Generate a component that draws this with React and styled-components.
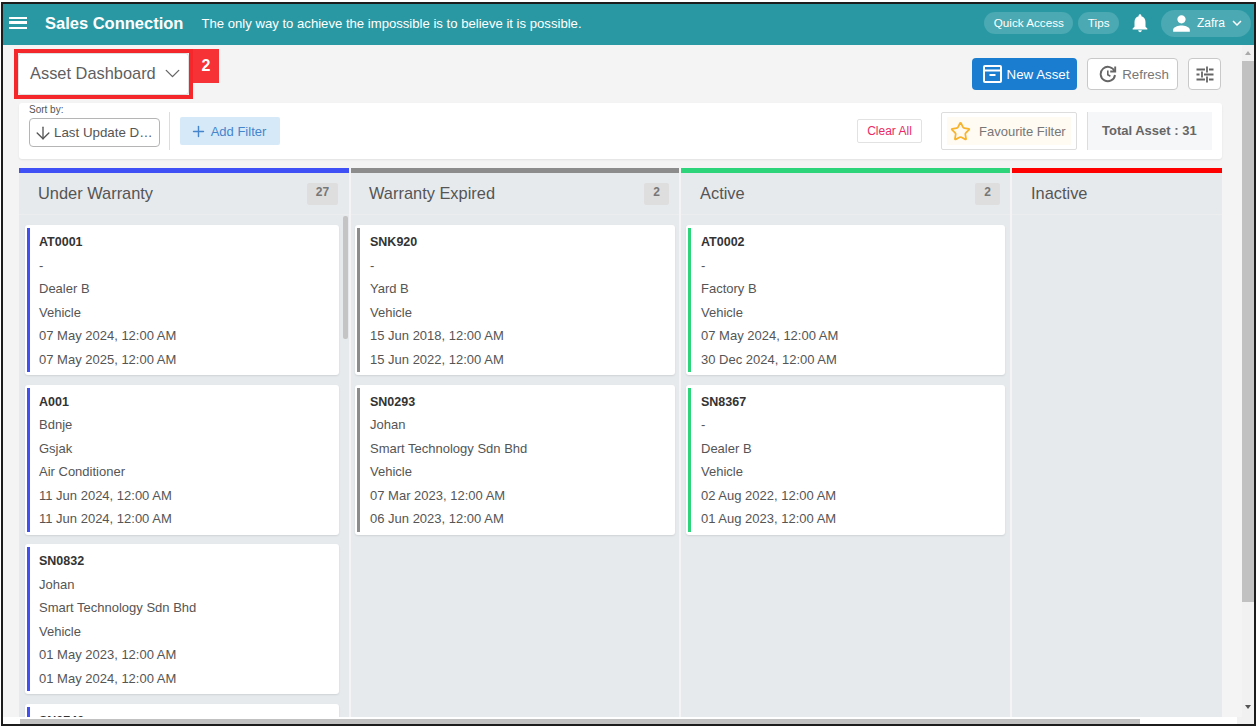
import React from "react";
import styled, { createGlobalStyle } from "styled-components";
import { ChevronDown, ArrowDown, Plus, Star } from "lucide-react";
import { MdNotifications, MdPerson, MdKeyboardArrowDown } from "react-icons/md";

const GlobalStyle = createGlobalStyle`
  html, body { margin: 0; padding: 0; background: #fff; overflow: hidden; }
  body { font-family: "Liberation Sans", Arial, sans-serif; }
  * { box-sizing: border-box; }
`;

const Frame = styled.div`
  width: 1255px;
  height: 724px;
  margin: 2px 0 0 1px;
  border: 2px solid #1c1c1c;
  display: flex;
  flex-direction: column;
  overflow: hidden;
  background: #f4f4f4;
`;

const Header = styled.header`
  height: 40.5px;
  flex: none;
  background: #2a98a3;
  color: #fff;
  display: flex;
  align-items: center;
  padding: 0 3px 0 6px;
`;

const Burger = styled.div`
  width: 18px;
  height: 12px;
  margin: -2px 18px 0 0;
  border-top: 2.5px solid #fff;
  border-bottom: 2.5px solid #fff;
  position: relative;
  &::after {
    content: "";
    position: absolute;
    left: 0;
    right: 0;
    top: 2px;
    height: 2.5px;
    background: #fff;
  }
`;

const Brand = styled.div`
  font-size: 16.5px;
  font-weight: 700;
  margin: -1px 18px 0 0;
`;

const Slogan = styled.div`
  font-size: 13.13px;
  flex: 1;
  margin-top: -2px;
`;

const Pill = styled.div`
  height: 22px;
  padding: 0 9.5px;
  border-radius: 11px;
  background: #4aa9b2;
  font-size: 11.7px;
  line-height: 21px;
  margin: -2px 5px 0 0;
`;

const BellWrap = styled.div`
  display: flex;
  margin: -2px 10px 0 5px;
`;

const UserPill = styled.div`
  width: 90px;
  height: 27px;
  border-radius: 14px;
  background: #4aa9b2;
  display: flex;
  align-items: center;
  padding-left: 8px;
  font-size: 12px;
  gap: 3px;
  margin-top: -2px;
`;

const Middle = styled.div`
  flex: 1;
  min-height: 0;
  display: flex;
`;

const Page = styled.main`
  flex: 1;
  min-width: 0;
  padding: 0 20px 0 16px;
  display: flex;
  flex-direction: column;
`;

const TitleRow = styled.div`
  height: 58.5px;
  flex: none;
  display: flex;
  align-items: flex-start;
`;

const Highlight = styled.div`
  margin: 4.5px 0 0 -5px;
  width: 179px;
  height: 50px;
  border: 4px solid #f5272b;
  padding: 1px;
`;

const ViewSelect = styled.div`
  height: 39.5px;
  background: #fff;
  border-radius: 2px;
  box-shadow: 0 0 2px rgba(0, 0, 0, 0.3);
  display: flex;
  align-items: center;
  justify-content: space-between;
  padding: 0 3px 1px 11px;
  font-size: 16.4px;
  color: #5f5f5f;
`;

const StepBadge = styled.div`
  margin-top: 4.5px;
  width: 26px;
  height: 34px;
  background: #f63236;
  color: #fff;
  font-size: 16px;
  font-weight: 700;
  text-align: center;
  line-height: 33px;
`;

const Actions = styled.div`
  margin: 13.5px 1px 0 auto;
  display: flex;
  gap: 10px;
`;

const ActionButton = styled.button`
  height: 32px;
  padding: 0 0 0 ${(p) => p.$pl || 0}px;
  width: ${(p) => p.$w}px;
  border-radius: 4px;
  border: ${(p) => (p.$primary ? "none" : "1px solid #c9c9c9")};
  background: ${(p) => (p.$primary ? "#1b7dcf" : "#fff")};
  color: ${(p) => (p.$primary ? "#fff" : "#777")};
  font-family: inherit;
  font-size: 13.33px;
  display: flex;
  align-items: center;
  justify-content: center;
  gap: 5px;
`;

const FilterCard = styled.section`
  height: 56px;
  flex: none;
  background: #fff;
  border-radius: 3px;
  box-shadow: 0 1px 2px rgba(0, 0, 0, 0.08);
  display: flex;
  align-items: center;
  padding: 0 10px;
`;

const SortBlock = styled.div`
  width: 131px;
  margin: 1px 0 12px;
`;

const SortLabel = styled.div`
  font-size: 10px;
  line-height: 11px;
  margin-bottom: 3px;
  color: #555;
`;

const SortSelect = styled.div`
  height: 29px;
  border: 1px solid #b5b5b5;
  border-radius: 4px;
  font-size: 13.33px;
  color: #555;
  display: flex;
  align-items: center;
  padding-left: 3px;
  gap: 1px;
  white-space: nowrap;
`;

const Divider = styled.div`
  width: 1px;
  height: 38px;
  background: #ddd;
  margin: 0 10px 0 9px;
`;

const AddFilter = styled.div`
  width: 100px;
  height: 28px;
  background: #d6e9f8;
  border-radius: 2px;
  color: #4585cc;
  font-size: 13px;
  display: flex;
  align-items: center;
  justify-content: center;
  gap: 4px;
  padding-right: 4px;
`;

const ClearAll = styled.div`
  margin-left: auto;
  width: 65px;
  height: 24px;
  border: 1px solid #e2e2e2;
  border-radius: 2px;
  color: #ea2a66;
  font-size: 12px;
  line-height: 22px;
  text-align: center;
`;

const Favourite = styled.div`
  margin-left: 19px;
  width: 136px;
  height: 38px;
  border: 1px solid #ddd;
  border-radius: 2px;
  padding: 4px 5px;
`;

const FavouriteInner = styled.div`
  height: 28px;
  background: #fffaf2;
  color: #777;
  font-size: 13px;
  display: flex;
  align-items: center;
  padding-left: 3px;
  gap: 8px;
  white-space: nowrap;
`;

const Total = styled.div`
  margin-left: 10px;
  width: 125px;
  height: 38px;
  background: #f6f7f9;
  border-left: 1px solid #ddd;
  color: #666;
  font-size: 13px;
  font-weight: 700;
  line-height: 38px;
  padding-left: 14px;
  white-space: nowrap;
`;

const Board = styled.div`
  flex: 1;
  min-height: 0;
  margin-top: 9px;
  display: flex;
  gap: 2px;
  overflow: hidden;
`;

const Column = styled.section`
  width: ${(p) => p.$w}px;
  flex: none;
  position: relative;
  background: #e7eaed;
  border-top: 5px solid ${(p) => p.$color};
  overflow: hidden;
`;

const ColumnHead = styled.div`
  height: 42px;
  border-bottom: 1px solid #ebedef;
  display: flex;
  align-items: center;
  justify-content: space-between;
  padding: 0 ${(p) => p.$pr}px 0 ${(p) => p.$tl}px;
`;

const ColumnTitle = styled.div`
  font-size: 16.4px;
  color: #555;
`;

const Count = styled.div`
  min-width: ${(p) => p.$w}px;
  height: 22px;
  background: #dedede;
  border-radius: 2px;
  color: #777;
  font-size: 12px;
  font-weight: 700;
  text-align: center;
  line-height: 18px;
`;

const CardList = styled.div`
  padding: 10px ${(p) => p.$pr}px 0 ${(p) => p.$pl}px;
  display: flex;
  flex-direction: column;
  gap: 9.5px;
`;

const Card = styled.article`
  height: 150px;
  flex: none;
  background: #fff;
  border-radius: 3px;
  box-shadow: 0 1px 2px rgba(0, 0, 0, 0.1);
  padding: 3px 0 3px 2px;
`;

const CardBody = styled.div`
  height: 144px;
  border-left: 3px solid ${(p) => p.$color};
  padding: 3px 0 0 ${(p) => p.$indent}px;
  font-size: 13px;
  line-height: 23.5px;
  color: #555;
  overflow: hidden;
`;

const CardId = styled.div`
  font-weight: 700;
  font-size: 12.5px;
  color: #333;
  margin-bottom: -1px;
`;

const ColumnScroll = styled.div`
  position: absolute;
  right: 1px;
  top: 43px;
  width: 5px;
  height: 123px;
  background: #c4c4c4;
  border-radius: 2px;
`;

const VScroll = styled.div`
  width: 12px;
  flex: none;
  background: #f1f1f1;
  position: relative;
  padding-top: 16px;
`;

const VThumb = styled.div`
  height: 541px;
  background: #c1c1c1;
`;

const Arrow = styled.div`
  position: absolute;
  left: 3px;
  ${(p) => (p.$down ? "bottom: 8px;" : "top: 6px;")}
  border-left: 3px solid transparent;
  border-right: 3px solid transparent;
  ${(p) => (p.$down ? "border-top: 4px solid #555;" : "border-bottom: 4px solid #aaa;")}
`;

const HScroll = styled.div`
  height: 7px;
  flex: none;
  background: #fff;
  padding: 2px 0 0 17px;
  display: flex;
  align-items: flex-start;
`;

const HThumb = styled.div`
  width: 1120px;
  height: 5px;
  background: #c1c1c1;
`;

const HCorner = styled.div`
  width: 17px;
  height: 7px;
  margin: -2px 0 0 auto;
  background: #f1f1f1;
`;

const ArchiveIcon = () => (
  <svg width="19" height="18" viewBox="0 0 19 18" fill="none" stroke="#fff" strokeWidth="2">
    <rect x="1" y="1" width="17" height="16" rx="1" />
    <path d="M1 5.5h17M6.5 10h6" />
  </svg>
);

const RefreshIcon = () => (
  <svg width="18" height="18" viewBox="0 0 18 18" fill="none" stroke="#666" strokeWidth="1.9">
    <path d="M15.6 6.5A7.2 7.2 0 1 0 16 10" />
    <path d="M16.2 1.5v5h-5" />
    <path d="M8.8 5.5V9.8l2.6 1.4" strokeWidth="1.6" />
  </svg>
);

const TuneIcon = () => (
  <svg width="18" height="17" viewBox="0 0 18 17" fill="none" stroke="#666" strokeWidth="1.8">
    <path d="M0.5 3.5h8.5M13 3.5h4.5M11 0.5v6" />
    <path d="M0.5 8.5h3M8 8.5h9.5M6 5.5v6" />
    <path d="M0.5 13.5h8.5M13 13.5h4.5M11 10.5v6" />
  </svg>
);

const columns = [
  {
    title: "Under Warranty", color: "#3f51f5", width: 330, count: "27", countWidth: 31, pl: 6, pr: 10, headPr: 11, tl: 19, indent: 9, scroll: true,
    cards: [
      ["AT0001", "-", "Dealer B", "Vehicle", "07 May 2024, 12:00 AM", "07 May 2025, 12:00 AM"],
      ["A001", "Bdnje", "Gsjak", "Air Conditioner", "11 Jun 2024, 12:00 AM", "11 Jun 2024, 12:00 AM"],
      ["SN0832", "Johan", "Smart Technology Sdn Bhd", "Vehicle", "01 May 2023, 12:00 AM", "01 May 2024, 12:00 AM"],
      ["SN0740"],
    ],
  },
  {
    title: "Warranty Expired", color: "#8c8c8c", width: 328, count: "2", countWidth: 25, pl: 4, pr: 4, headPr: 10, tl: 18, indent: 10,
    cards: [
      ["SNK920", "-", "Yard B", "Vehicle", "15 Jun 2018, 12:00 AM", "15 Jun 2022, 12:00 AM"],
      ["SN0293", "Johan", "Smart Technology Sdn Bhd", "Vehicle", "07 Mar 2023, 12:00 AM", "06 Jun 2023, 12:00 AM"],
    ],
  },
  {
    title: "Active", color: "#2ed47a", width: 329, count: "2", countWidth: 25, pl: 5, pr: 5, headPr: 10, tl: 19, indent: 10,
    cards: [
      ["AT0002", "-", "Factory B", "Vehicle", "07 May 2024, 12:00 AM", "30 Dec 2024, 12:00 AM"],
      ["SN8367", "-", "Dealer B", "Vehicle", "02 Aug 2022, 12:00 AM", "01 Aug 2023, 12:00 AM"],
    ],
  },
  { title: "Inactive", color: "#ff0000", width: 210, pl: 5, pr: 5, headPr: 10, tl: 19, indent: 10, cards: [] },
];

export default function App() {
  return (
    <>
      <GlobalStyle />
      <Frame>
        <Header>
          <Burger />
          <Brand>Sales Connection</Brand>
          <Slogan>The only way to achieve the impossible is to believe it is possible.</Slogan>
          <Pill>Quick Access</Pill>
          <Pill>Tips</Pill>
          <BellWrap>
            <MdNotifications size={22} color="#fff" />
          </BellWrap>
          <UserPill>
            <MdPerson size={25} color="#fff" />
            <span>Zafra</span>
            <MdKeyboardArrowDown size={18} color="#fff" />
          </UserPill>
        </Header>
        <Middle>
          <Page>
            <TitleRow>
              <Highlight>
                <ViewSelect>
                  Asset Dashboard
                  <ChevronDown size={25} strokeWidth={1.3} color="#666" />
                </ViewSelect>
              </Highlight>
              <StepBadge>2</StepBadge>
              <Actions>
                <ActionButton $primary $w={105} $pl={3}>
                  <ArchiveIcon />
                  New Asset
                </ActionButton>
                <ActionButton $w={91} $pl={3}>
                  <RefreshIcon />
                  Refresh
                </ActionButton>
                <ActionButton $w={33}>
                  <TuneIcon />
                </ActionButton>
              </Actions>
            </TitleRow>
            <FilterCard>
              <SortBlock>
                <SortLabel>Sort by:</SortLabel>
                <SortSelect>
                  <ArrowDown size={20} strokeWidth={1.6} color="#555" />
                  Last Update D…
                </SortSelect>
              </SortBlock>
              <Divider />
              <AddFilter>
                <Plus size={17} strokeWidth={2} color="#4585cc" />
                Add Filter
              </AddFilter>
              <ClearAll>Clear All</ClearAll>
              <Favourite>
                <FavouriteInner>
                  <Star size={21} strokeWidth={2} color="#f7b32b" />
                  Favourite Filter
                </FavouriteInner>
              </Favourite>
              <Total>Total Asset : 31</Total>
            </FilterCard>
            <Board>
              {columns.map((col) => (
                <Column key={col.title} $w={col.width} $color={col.color}>
                  <ColumnHead $pr={col.headPr} $tl={col.tl}>
                    <ColumnTitle>{col.title}</ColumnTitle>
                    {col.count && <Count $w={col.countWidth}>{col.count}</Count>}
                  </ColumnHead>
                  <CardList $pl={col.pl} $pr={col.pr}>
                    {col.cards.map((lines) => (
                      <Card key={lines[0]}>
                        <CardBody $color={col.color} $indent={col.indent}>
                          <CardId>{lines[0]}</CardId>
                          {lines.slice(1).map((line, i) => (
                            <div key={i}>{line}</div>
                          ))}
                        </CardBody>
                      </Card>
                    ))}
                  </CardList>
                  {col.scroll && <ColumnScroll />}
                </Column>
              ))}
            </Board>
          </Page>
          <VScroll>
            <Arrow />
            <VThumb />
            <Arrow $down />
          </VScroll>
        </Middle>
        <HScroll>
          <HThumb />
          <HCorner />
        </HScroll>
      </Frame>
    </>
  );
}
